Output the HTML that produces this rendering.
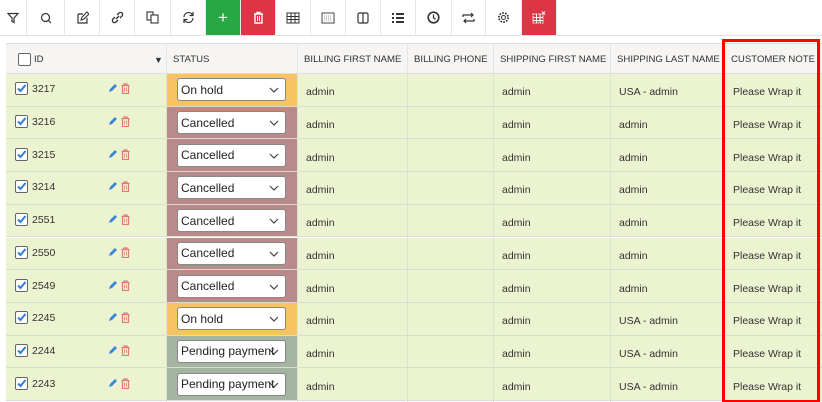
<!DOCTYPE html>
<html><head><meta charset="utf-8"><style>
*{box-sizing:border-box;margin:0;padding:0}
body{width:822px;height:402px;overflow:hidden;background:#fff;font-family:"Liberation Sans",sans-serif;position:relative;color:#333}
.tb{position:absolute;top:0;height:35px;border-right:1px solid #e6e6e6;display:flex;align-items:center;justify-content:center}
.tbl{position:absolute;left:0;top:35px;width:822px;height:1px;background:#e2e2e2}
.hdr{position:absolute;top:43px;height:31px;background:#f6f5f3;border-top:1px solid #ddd;border-bottom:1px solid #ddd}
.hc{position:absolute;top:43px;height:31px;font-size:9.6px;color:#333;display:flex;align-items:center;padding-left:6px;border-left:1px solid #e4e4e4;white-space:nowrap;overflow:hidden;padding-top:2px}
.row{position:absolute;left:6px;width:816px;background:#ebf3d0;border-bottom:1px solid #d9dcd0}
.c{position:absolute;font-size:10.5px;display:flex;align-items:center;white-space:nowrap}
.vl{position:absolute;top:43px;height:359px;width:1px;background:#dfe3d4}
.sel{position:absolute;left:177px;width:109px;height:23px;background:#fff;border:1px solid #888;border-radius:3px;font-size:12px;display:flex;align-items:center;padding-left:3px;color:#222;overflow:hidden;white-space:nowrap}
.sel svg{position:absolute;right:6px;top:8px}
.cb{position:absolute;left:15px;width:13px;height:13px;border:1px solid #666;border-radius:2px;background:#fff}
</style></head><body>
<div class="tb" style="left:0;width:27px"><svg width="12" height="12" viewBox="0 0 12 12"><path d="M1 1.5h10L7 6v4.5L5 9.5V6z" fill="none" stroke="#333" stroke-width="1.2"/></svg></div>
<div class="tb" style="left:27px;width:38px"><svg width="12" height="12"><circle cx="5.5" cy="5.5" r="4" fill="none" stroke="#333" stroke-width="1.2"/><path d="M8.5 8.5l2.5 2.5" stroke="#333" stroke-width="1.2"/></svg></div>
<div class="tb" style="left:65px;width:35px"><svg width="13" height="13"><path d="M2 3h5M2 3v9h9V7" fill="none" stroke="#333" stroke-width="1.2"/><path d="M5 9l1-3 5-5 2 2-5 5z" fill="none" stroke="#333" stroke-width="1.1"/></svg></div>
<div class="tb" style="left:100px;width:35px"><svg width="13" height="13"><path d="M5 8l3-3M4 6l-2 2a2 2 0 0 0 3 3l2-2M9 7l2-2a2 2 0 0 0-3-3L6 4" fill="none" stroke="#333" stroke-width="1.3"/></svg></div>
<div class="tb" style="left:135px;width:36px"><svg width="13" height="13"><rect x="1" y="1" width="6" height="8" fill="none" stroke="#333" stroke-width="1.1"/><rect x="5" y="4" width="7" height="8" fill="#fff" stroke="#333" stroke-width="1.1"/></svg></div>
<div class="tb" style="left:171px;width:35px"><svg width="13" height="13"><path d="M2 6a4.5 4.5 0 0 1 8.5-2M11 7a4.5 4.5 0 0 1-8.5 2" fill="none" stroke="#333" stroke-width="1.2"/><path d="M11 1v3.5H7.5M2 12V8.5h3.5" fill="none" stroke="#333" stroke-width="1.2"/></svg></div>
<div class="tb" style="left:206px;width:35px;background:#28a745;color:#fff;font-size:17px">+</div>
<div class="tb" style="left:241px;width:35px;background:#dc3545"><svg width="11" height="13"><path d="M1 3h9M4 3V1.5h3V3M2 3v9h7V3" fill="none" stroke="#fff" stroke-width="1.4"/><path d="M4.5 5v5M6.5 5v5" stroke="#fff"/></svg></div>
<div class="tb" style="left:276px;width:35px"><svg width="14" height="12"><rect x="1" y="1" width="12" height="10" fill="none" stroke="#333"/><path d="M1 4.5h12M1 7.5h12M5 1v10M9 1v10" stroke="#333"/></svg></div>
<div class="tb" style="left:311px;width:35px"><svg width="14" height="12"><rect x="1" y="1" width="12" height="10" fill="none" stroke="#444"/><path d="M3 4h8M3 6h8M3 8h8" stroke="#999" stroke-dasharray="1 1"/></svg></div>
<div class="tb" style="left:346px;width:35px"><svg width="12" height="12"><rect x="1" y="1" width="10" height="10" rx="1.5" fill="none" stroke="#333" stroke-width="1.2"/><path d="M6 1v10" stroke="#333" stroke-width="1.2"/></svg></div>
<div class="tb" style="left:381px;width:35px"><svg width="14" height="12"><path d="M1 2h2M1 6h2M1 10h2M5 2h8M5 6h8M5 10h8" stroke="#333" stroke-width="2"/></svg></div>
<div class="tb" style="left:416px;width:36px"><svg width="13" height="13"><circle cx="6.5" cy="6.5" r="5.3" fill="none" stroke="#333" stroke-width="1.6"/><path d="M6.5 3.5v3.3l2 1.5" fill="none" stroke="#333" stroke-width="1.3"/></svg></div>
<div class="tb" style="left:452px;width:34px"><svg width="13" height="12"><path d="M1 5V3h10M9 1l2 2-2 2M12 7v2H2M4 11L2 9l2-2" fill="none" stroke="#333" stroke-width="1.2"/></svg></div>
<div class="tb" style="left:486px;width:36px"><svg width="13" height="13"><circle cx="6.5" cy="6.5" r="2" fill="none" stroke="#333"/><circle cx="6.5" cy="6.5" r="4.6" fill="none" stroke="#333" stroke-width="1.8" stroke-dasharray="1.6 1.3"/></svg></div>
<div class="tb" style="left:522px;width:35px;background:#dc3545"><svg width="14" height="13"><rect x="1" y="3" width="10" height="9" fill="none" stroke="#fff" stroke-dasharray="1.5 0.8"/><path d="M1 6.5h10M1 9.5h10M4.5 3v9M8 3v9" stroke="#fff"/><path d="M10 0.5l3 3M13 0.5l-3 3" stroke="#fff"/></svg></div>
<div class="tbl"></div>

<div class="hdr" style="left:6px;width:816px"></div>
<div class="hc" style="left:6px;width:160px;border-left:none;padding-left:12px"><span style="display:inline-block;width:13px;height:13px;border:1px solid #666;border-radius:2px;background:#fff;margin-right:3px"></span>ID<span style="position:absolute;left:148px;font-size:9px">▼</span></div>
<div class="hc" style="left:166px;width:131px">STATUS</div>
<div class="hc" style="left:297px;width:110px">BILLING FIRST NAME</div>
<div class="hc" style="left:407px;width:86px">BILLING PHONE</div>
<div class="hc" style="left:493px;width:117px">SHIPPING FIRST NAME</div>
<div class="hc" style="left:610px;width:114px">SHIPPING LAST NAME</div>
<div class="hc" style="left:724px;width:96px">CUSTOMER NOTE</div>

<div id="rows"></div>
<script>
var d=[["3217","On hold","USA - admin"],["3216","Cancelled","admin"],["3215","Cancelled","admin"],["3214","Cancelled","admin"],["2551","Cancelled","admin"],["2550","Cancelled","admin"],["2549","Cancelled","admin"],["2245","On hold","USA - admin"],["2244","Pending payment","USA - admin"],["2243","Pending payment","USA - admin"]];
var col={"On hold":"#f8c462","Cancelled":"#b98a8a","Pending payment":"#a3b5a0"};
var h="";
d.forEach(function(r,i){
var t=74+i*32.7,H=32.7;
h+='<div class="row" style="top:'+t+'px;height:'+H+'px"></div>';
h+='<div style="position:absolute;left:166px;top:'+t+'px;width:131px;height:'+(H-1)+'px;background:'+col[r[1]]+'"></div>';
var m=t+H/2;
h+='<div class="cb" style="top:'+(m-8)+'px"><svg width="11" height="11" style="position:absolute;left:0;top:0"><path d="M2 5.5l2.5 2.5L9.5 2" fill="none" stroke="#2f7fd6" stroke-width="2"/></svg></div>';
h+='<div class="c" style="left:32px;top:'+(m-9)+'px;height:16px">'+r[0]+'</div>';
h+='<svg style="position:absolute;left:108px;top:'+(m-7)+'px" width="10" height="10"><path d="M1 9l1-3 5-5 2 2-5 5z" fill="#3a86d8"/></svg>';
h+='<svg style="position:absolute;left:121px;top:'+(m-7)+'px" width="9" height="11"><path d="M0.5 2.5h8M3 2.5V1h3v1.5M1.5 2.5v8h6v-8" fill="none" stroke="#e07a7a" stroke-width="1.2"/><path d="M3.5 4.5v4M5.5 4.5v4" stroke="#e0a070"/></svg>';
h+='<div class="sel" style="top:'+(m-12)+'px">'+r[1]+'<svg width="10" height="6"><path d="M1 1l4 4 4-4" fill="none" stroke="#444" stroke-width="1.2"/></svg></div>';
h+='<div class="c" style="left:306px;top:'+(m-4)+'px">admin</div>';
h+='<div class="c" style="left:502px;top:'+(m-4)+'px">admin</div>';
h+='<div class="c" style="left:619px;top:'+(m-4)+'px">'+r[2]+'</div>';
h+='<div class="c" style="left:733px;top:'+(m-4)+'px">Please Wrap it</div>';
});
[166,297,407,493,610,724].forEach(function(x){h+='<div class="vl" style="left:'+x+'px;top:74px;height:328px"></div>'});
document.getElementById("rows").innerHTML=h;
</script>
<div style="position:absolute;left:0;top:43px;width:6px;height:359px;background:#fff"></div>
<div style="position:absolute;left:722px;top:39px;width:98px;height:363px;border:3px solid #f00;border-bottom-width:2px"></div>
</body></html>
